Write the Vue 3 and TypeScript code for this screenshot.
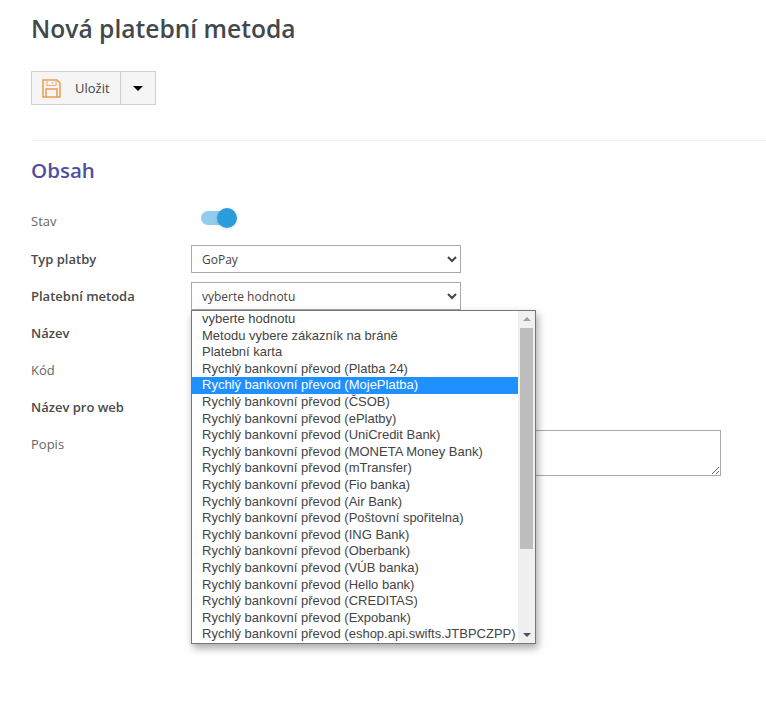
<template>
  <div class="page">
    <h1 class="title">Nová platební metoda</h1>

    <div class="btn-group">
      <button class="btn btn-save" type="button">
        <svg class="save-icon" width="19" height="19" viewBox="0 0 19 19" fill="none">
          <path d="M1 1h14l3 3v14H1z" stroke="#ec9c50" stroke-width="1.5" />
          <path d="M5 1v5.5h9V1" stroke="#f0b27c" stroke-width="1.2" />
          <path d="M4 18v-8h11v8" stroke="#ec9c50" stroke-width="1.5" />
          <path d="M10.5 3v1.5" stroke="#f0b27c" stroke-width="1.5" />
        </svg>
        <span>Uložit</span>
      </button>
      <button class="btn btn-caret" type="button" aria-label="Další možnosti">
        <span class="caret"></span>
      </button>
    </div>

    <hr class="divider" />

    <h2 class="section">Obsah</h2>

    <form class="form" @submit.prevent>
      <div class="row">
        <label class="label label-state">Stav</label>
        <div class="toggle">
          <span class="toggle-track"></span>
          <span class="toggle-knob"></span>
        </div>
      </div>

      <div class="row">
        <label class="label strong">Typ platby</label>
        <select class="control">
          <option>GoPay</option>
        </select>
      </div>

      <div class="row">
        <label class="label strong">Platební metoda</label>
        <div class="select-wrap">
          <select class="control">
            <option>vyberte hodnotu</option>
          </select>

          <!-- rozbalený seznam -->
          <div class="dropdown">
            <ul class="options">
              <li
                v-for="item in methods"
                :key="item"
                class="option"
                :class="{ active: item === selected }"
              >
                {{ item }}
              </li>
            </ul>
            <div class="scrollbar">
              <span class="arrow up"></span>
              <span class="thumb"></span>
              <span class="arrow down"></span>
            </div>
          </div>
        </div>
      </div>

      <div class="row">
        <label class="label strong">Název</label>
        <input class="control" type="text" />
      </div>

      <div class="row">
        <label class="label">Kód</label>
        <input class="control" type="text" />
      </div>

      <div class="row">
        <label class="label strong">Název pro web</label>
        <input class="control" type="text" />
      </div>

      <div class="row row-top">
        <label class="label">Popis</label>
        <textarea class="area"></textarea>
      </div>
    </form>
  </div>
</template>

<script setup lang="ts">
const selected = 'Rychlý bankovní převod (MojePlatba)'

const methods: string[] = [
  'vyberte hodnotu',
  'Metodu vybere zákazník na bráně',
  'Platební karta',
  'Rychlý bankovní převod (Platba 24)',
  'Rychlý bankovní převod (MojePlatba)',
  'Rychlý bankovní převod (ČSOB)',
  'Rychlý bankovní převod (ePlatby)',
  'Rychlý bankovní převod (UniCredit Bank)',
  'Rychlý bankovní převod (MONETA Money Bank)',
  'Rychlý bankovní převod (mTransfer)',
  'Rychlý bankovní převod (Fio banka)',
  'Rychlý bankovní převod (Air Bank)',
  'Rychlý bankovní převod (Poštovní spořitelna)',
  'Rychlý bankovní převod (ING Bank)',
  'Rychlý bankovní převod (Oberbank)',
  'Rychlý bankovní převod (VÚB banka)',
  'Rychlý bankovní převod (Hello bank)',
  'Rychlý bankovní převod (CREDITAS)',
  'Rychlý bankovní převod (Expobank)',
  'Rychlý bankovní převod (eshop.api.swifts.JTBPCZPP)',
]
</script>

<style>
html,
body {
  background: #fff;
}
</style>

<style scoped>
.page {
  height: 701px;
  box-sizing: border-box;
  padding: 12px 0 0 31px;
  overflow: hidden;
  font-family: 'Open Sans', 'Noto Sans', sans-serif;
  font-size: 13px;
  color: #444;
}
.title {
  margin: 0;
  font-size: 24.6px;
  line-height: 33px;
  font-weight: 600;
  color: #43484d;
}
.btn-group {
  display: flex;
  width: 125px;
  height: 34px;
  margin-top: 26px;
  box-sizing: border-box;
  border: 1px solid #cfcfcf;
  background: #f5f5f5;
}
.btn {
  display: flex;
  align-items: center;
  padding: 0;
  border: 0;
  background: none;
  font: inherit;
  color: #444;
}
.btn-save {
  width: 89px;
  box-sizing: border-box;
  padding-left: 10px;
  border-right: 1px solid #cfcfcf;
}
.save-icon {
  margin-right: 14px;
}
.btn-caret {
  flex: 1;
  justify-content: center;
}
.caret {
  width: 0;
  height: 0;
  border-left: 5px solid transparent;
  border-right: 5px solid transparent;
  border-top: 5px solid #000;
}
.divider {
  height: 1px;
  margin: 35px 0 0;
  border: 0;
  background: #f3f3f3;
}
.section {
  margin: 16px 0 0;
  font-size: 20.5px;
  line-height: 27px;
  font-weight: 600;
  color: #4f4f9f;
}
.form {
  display: flex;
  flex-direction: column;
  gap: 9px;
  margin-top: 24px;
}
.row {
  display: flex;
  align-items: center;
  min-height: 28px;
}
.row-top {
  align-items: flex-start;
}
.label {
  width: 160px;
  flex-shrink: 0;
  color: #666;
  line-height: 28px;
}
.label-state {
  line-height: 26px;
  margin-bottom: 2px;
}
.label.strong {
  font-weight: 600;
  color: #4a4a4a;
}
.toggle {
  position: relative;
  width: 36px;
  height: 20px;
  margin-left: 10px;
  margin-bottom: 8px;
}
.toggle-track {
  position: absolute;
  left: 0;
  top: 3px;
  width: 30px;
  height: 14px;
  border-radius: 7px;
  background: #8fcdea;
}
.toggle-knob {
  position: absolute;
  left: 16px;
  top: 0;
  width: 20px;
  height: 20px;
  border-radius: 50%;
  background: #2b9cdc;
  box-shadow: 0 1px 3px rgba(0, 0, 0, 0.12);
}
.select-wrap {
  position: relative;
  width: 270px;
  height: 28px;
}
.control {
  display: block;
  width: 270px;
  height: 28px;
  box-sizing: border-box;
  padding: 0 6px;
  border: 1px solid #aaa;
  border-radius: 0;
  background-color: #fff;
  font-family: inherit;
  font-size: 12px;
  color: #444;
}
.area {
  display: block;
  width: 530px;
  height: 46px;
  box-sizing: border-box;
  border: 1px solid #aaa;
  border-radius: 0;
  background: #fff;
}
.dropdown {
  position: absolute;
  left: 0;
  top: 28px;
  z-index: 5;
  display: flex;
  width: 345px;
  height: 334px;
  box-sizing: border-box;
  border: 1px solid #767676;
  background: #fff;
  box-shadow: 2px 4px 8px rgba(0, 0, 0, 0.35);
}
.options {
  flex: 1;
  min-width: 0;
  margin: 0;
  padding: 0;
  list-style: none;
  font-family: 'Liberation Sans', Arial, sans-serif;
  font-size: 13px;
  color: #444;
}
.option {
  height: 16.6px;
  line-height: 15px;
  padding-left: 10px;
  white-space: nowrap;
}
.option.active {
  background: #1e90ff;
  color: #fff;
}
.scrollbar {
  position: relative;
  width: 17px;
  flex-shrink: 0;
  background: #f0f0f0;
}
.thumb {
  position: absolute;
  left: 2px;
  top: 17px;
  width: 13px;
  height: 221px;
  background: #bdbdbd;
}
.arrow {
  position: absolute;
  left: 5px;
  width: 0;
  height: 0;
  border-left: 4px solid transparent;
  border-right: 4px solid transparent;
}
.arrow.up {
  top: 6px;
  border-bottom: 4px solid #a0a0a0;
}
.arrow.down {
  bottom: 6px;
  border-top: 4px solid #505050;
}
</style>
